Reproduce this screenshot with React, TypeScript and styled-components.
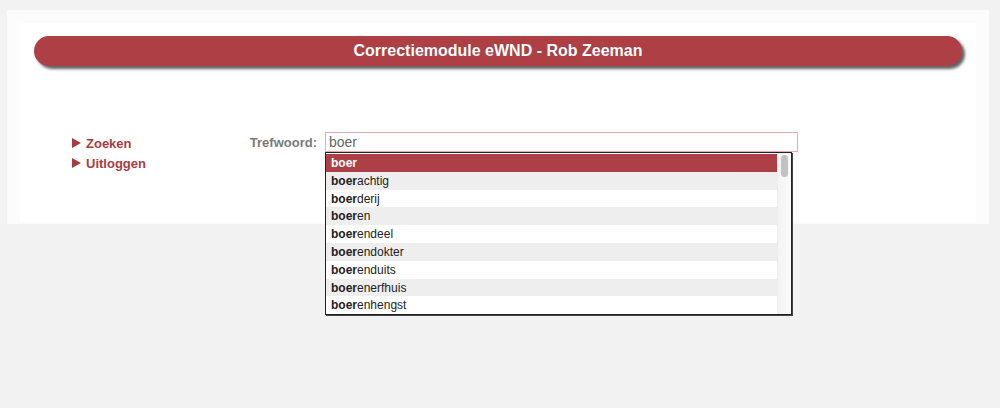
import React from "react";
import styled, { createGlobalStyle } from "styled-components";

const Global = createGlobalStyle`
  html, body { margin: 0; padding: 0; background: #f2f2f2; height: 100%; }
  #root { min-height: 100%; }
  body { font-family: "Liberation Sans", Arial, Helvetica, sans-serif; }
`;

const Page = styled.div`
  padding: 10px 11px 0 7px;
  width: 982px;
  min-height: 408px;
  box-sizing: content-box;
`;

const OuterPanel = styled.div`
  background: #fcfcfc;
  padding: 13px 13px 2px 13px;
`;

const InnerPanel = styled.div`
  background: #ffffff;
  height: 199px;
  padding-top: 13px;
  box-sizing: border-box;
`;

const Header = styled.div`
  margin: 0 14px;
  height: 30px;
  border-radius: 15px;
  background: #ad3f45;
  box-shadow: 3px 3px 3px rgba(70, 70, 70, 0.85);
  color: #fff;
  font-weight: bold;
  font-size: 16px;
  line-height: 30px;
  text-align: center;
  text-shadow: 0 0 1px rgba(0, 0, 0, 0.15);
`;

const FormRow = styled.div`
  display: flex;
  align-items: flex-start;
  margin-top: 66px;
  padding-left: 52px;
`;

const Nav = styled.ul`
  list-style: none;
  margin: 1px 0 0 0;
  padding: 0;
  width: 170px;
`;

const NavItem = styled.li`
  display: flex;
  align-items: center;
  height: 20px;
  color: #a83b42;
  font-weight: bold;
  font-size: 13px;
  &::before {
    content: "";
    width: 0;
    height: 0;
    border-top: 5px solid transparent;
    border-bottom: 5px solid transparent;
    border-left: 9px solid #a83b42;
    margin-right: 5px;
  }
`;

const Label = styled.label`
  width: 75px;
  text-align: right;
  color: #7a7a7a;
  font-weight: bold;
  font-size: 13px;
  line-height: 22px;
  margin-right: 8px;
`;

const Field = styled.div`
  position: relative;
  width: 473px;
  z-index: 2;
`;

const Input = styled.div`
  box-sizing: border-box;
  height: 20px;
  border: 1px solid #e9a9ad;
  padding-left: 3px;
  color: #666;
  font-size: 14px;
  line-height: 18px;
  background: #fff;
`;

const Dropdown = styled.div`
  position: absolute;
  left: 0;
  top: 20px;
  width: 467px;
  height: 163px;
  box-sizing: border-box;
  border: 1px solid #222;
  box-shadow: 1px 1px 0 #444;
  background: #fff;
  display: flex;
  overflow: hidden;
`;

const List = styled.ul`
  list-style: none;
  margin: 0;
  padding: 1px 0 0 0;
  flex: 1;
`;

const Row = styled.li<{ $active?: boolean; $alt?: boolean }>`
  height: 17.8px;
  line-height: 19px;
  padding-left: 5px;
  font-size: 12px;
  overflow: hidden;
  color: ${(p) => (p.$active ? "#fff" : "#222")};
  font-weight: ${(p) => (p.$active ? "bold" : "normal")};
  background: ${(p) => (p.$active ? "#ad4046" : p.$alt ? "#eeeeee" : "#ffffff")};
  b { font-weight: bold; }
`;

const ScrollTrack = styled.div`
  width: 13px;
  border-left: 1px solid #ececec;
  background: linear-gradient(to right, #f4f4f4, #fafafa);
  position: relative;
`;

const ScrollThumb = styled.div`
  position: absolute;
  top: 2px;
  left: 3px;
  width: 7px;
  height: 22px;
  border-radius: 4px;
  background: #c2c2c2;
`;

const items = [
  "boer",
  "boerachtig",
  "boerderij",
  "boeren",
  "boerendeel",
  "boerendokter",
  "boerenduits",
  "boerenerfhuis",
  "boerenhengst",
];

export default function App() {
  return (
    <>
      <Global />
      <Page>
        <OuterPanel>
          <InnerPanel>
            <Header>Correctiemodule eWND - Rob Zeeman</Header>
            <FormRow>
              <Nav>
                <NavItem>Zoeken</NavItem>
                <NavItem>Uitloggen</NavItem>
              </Nav>
              <Label>Trefwoord:</Label>
              <Field>
                <Input>boer</Input>
                <Dropdown>
                  <List>
                    {items.map((it, i) => (
                      <Row key={it} $active={i === 0} $alt={i % 2 === 1}>
                        <b>boer</b>
                        {it.slice(4)}
                      </Row>
                    ))}
                  </List>
                  <ScrollTrack>
                    <ScrollThumb />
                  </ScrollTrack>
                </Dropdown>
              </Field>
            </FormRow>
          </InnerPanel>
        </OuterPanel>
      </Page>
    </>
  );
}
